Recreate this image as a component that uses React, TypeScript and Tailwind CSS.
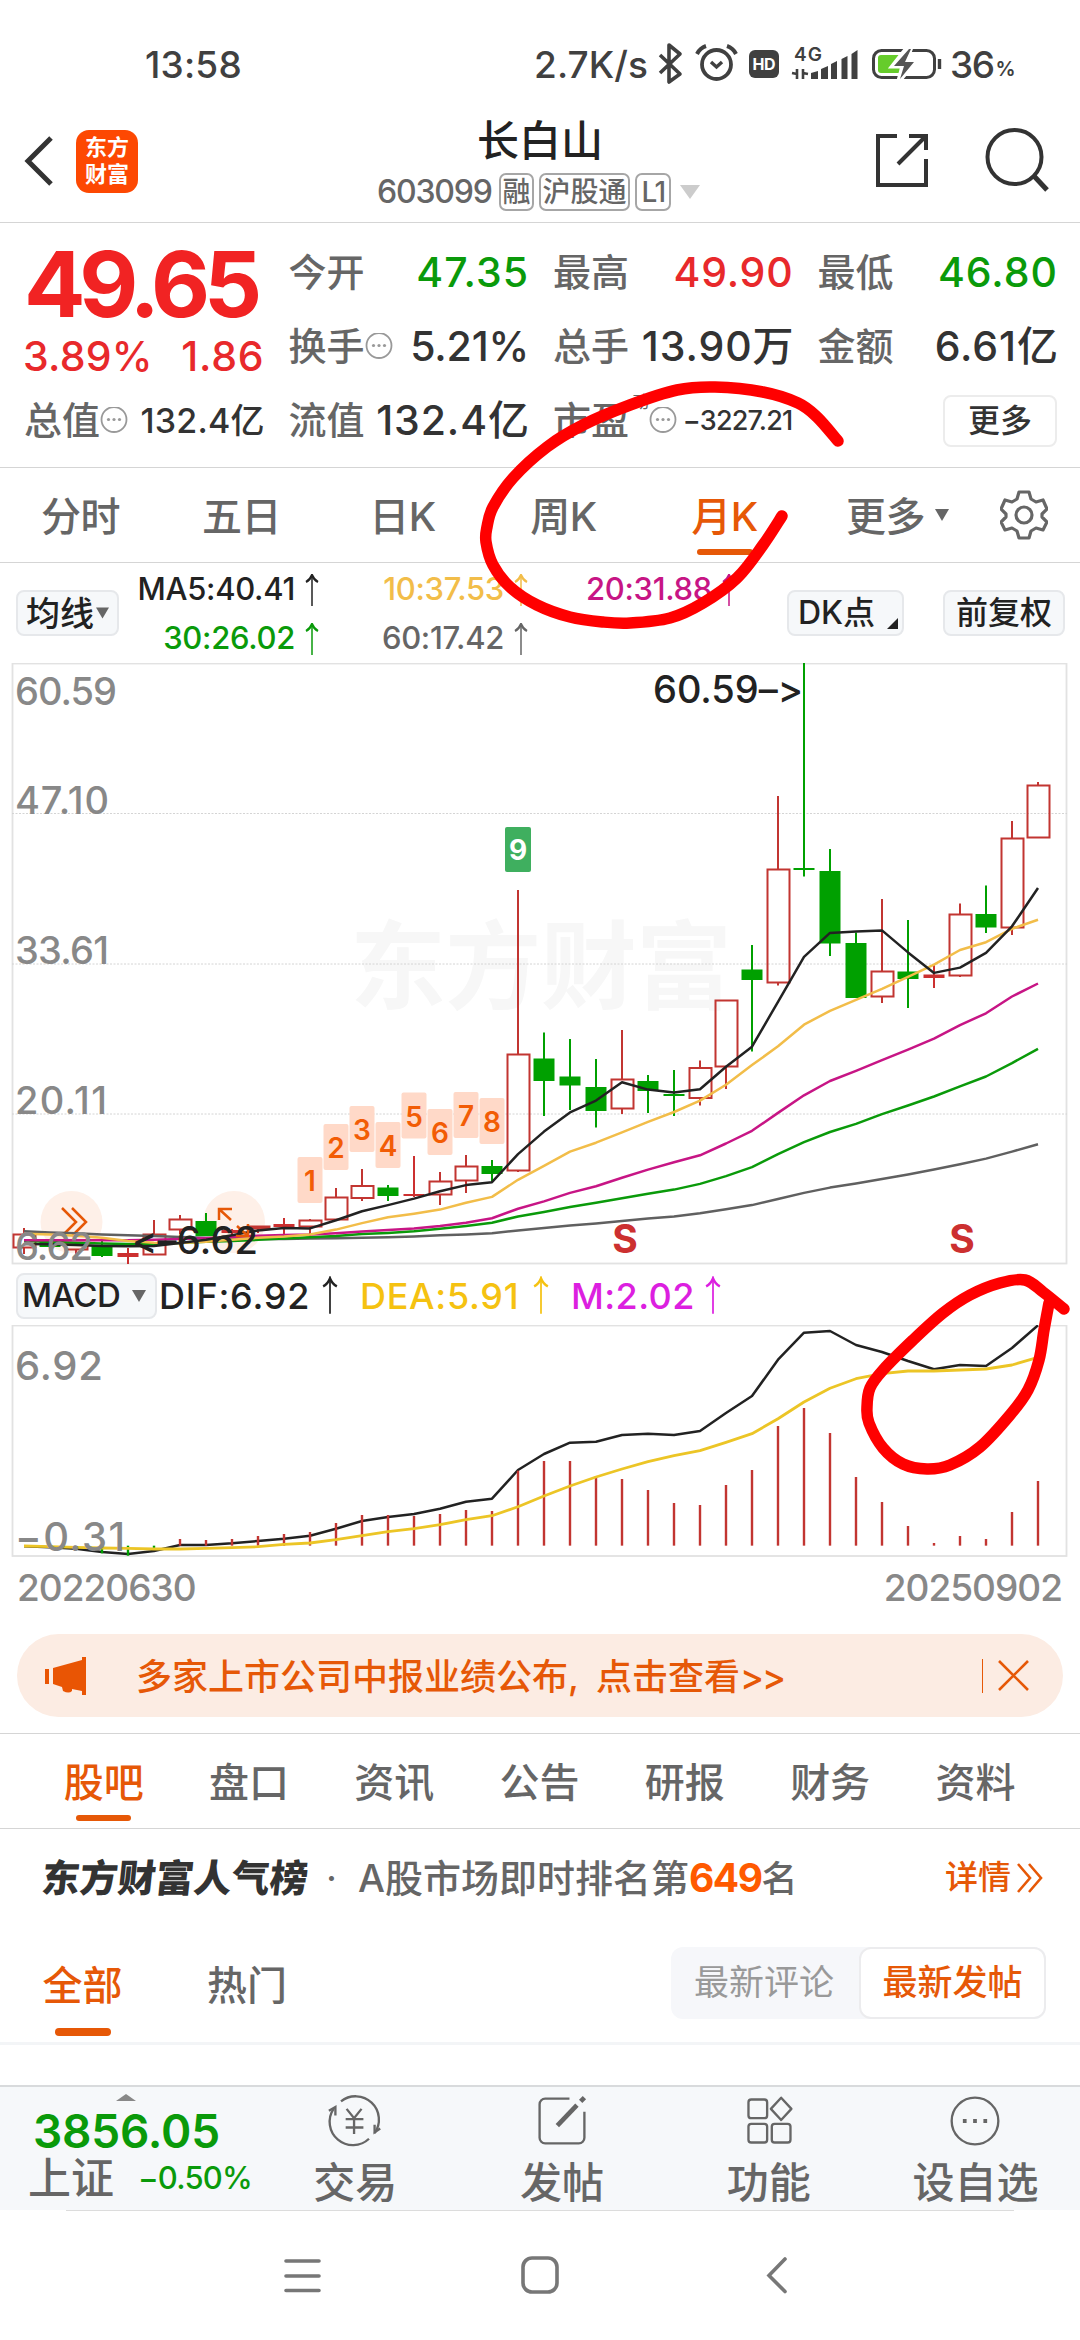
import React from 'react';
import clsx from 'clsx';

type Point = [number, number];

interface Candle {
  kind: 'up' | 'down' | 'flat';
  top: number;
  bottom: number;
  high: number;
  low: number;
}

const STEP = 26;
const FIRST_X = 24;
const xAt = (i: number) => FIRST_X + i * STEP;

const c = (kind: Candle['kind'], top: number, bottom: number, high: number, low: number): Candle => ({
  kind,
  top,
  bottom,
  high,
  low,
});

const candles: Candle[] = [
  c('up', 1234, 1248, 1228, 1254),
  c('down', 1242, 1247, 1242, 1249),
  c('up', 1244, 1250, 1244, 1254),
  c('down', 1246, 1256, 1238, 1257),
  c('flat', 1253, 1257, 1248, 1264),
  c('up', 1234, 1255, 1220, 1255),
  c('up', 1219, 1230, 1215, 1234),
  c('down', 1221, 1236, 1213, 1236),
  c('flat', 1230, 1233, 1229, 1235),
  c('up', 1226, 1229, 1226, 1233),
  c('flat', 1224, 1227, 1218, 1234),
  c('up', 1220, 1227, 1219, 1236),
  c('up', 1197, 1220, 1188, 1220),
  c('up', 1185.5, 1198.5, 1169, 1201),
  c('down', 1187.5, 1196, 1185, 1201),
  c('flat', 1194, 1196, 1156, 1197),
  c('up', 1181, 1195, 1172, 1205),
  c('up', 1166, 1181, 1155, 1193),
  c('down', 1166, 1174, 1160, 1182),
  c('up', 1054, 1171, 890, 1172),
  c('down', 1058.5, 1081, 1032.5, 1116),
  c('down', 1076.5, 1085.5, 1039, 1110),
  c('down', 1087, 1111, 1059, 1127.5),
  c('up', 1079, 1109, 1030, 1114),
  c('down', 1081, 1091, 1075, 1113),
  c('down', 1094, 1096, 1070, 1116),
  c('up', 1067.5, 1098.5, 1060.5, 1105.5),
  c('up', 1000, 1067, 1000, 1089),
  c('down', 969.5, 980, 945, 1051.5),
  c('up', 869, 983, 796, 985.5),
  c('down', 868, 870, 663, 876.5),
  c('down', 871, 943.5, 849, 956),
  c('down', 943, 998, 932.5, 998),
  c('up', 971, 997, 899, 1003),
  c('down', 971.5, 979, 920, 1008),
  c('flat', 974.5, 978, 964, 988),
  c('up', 914, 976, 903.5, 977),
  c('down', 914, 927.5, 885.5, 933),
  c('up', 838, 928, 821, 935),
  c('up', 785, 838, 782, 838),
];

// averages are sampled on a finer vertical scale than the candles
const averages = [
  {
    color: '#606060',
    values: [1424, 1427, 1429, 1432, 1434, 1436, 1438, 1440, 1442, 1443, 1443, 1442, 1441, 1440, 1439, 1437, 1434, 1432, 1429, 1422, 1416, 1410, 1405, 1399, 1393, 1388, 1380, 1370, 1360, 1345, 1330, 1317, 1307, 1296, 1285, 1273, 1260, 1246, 1229, 1211],
  },
  {
    color: '#0a9a0a',
    values: [1448, 1450, 1452, 1454, 1455, 1455, 1453, 1450, 1448, 1445, 1442, 1439, 1436, 1431, 1428, 1424, 1418, 1411, 1403, 1388, 1377, 1365, 1354, 1343, 1332, 1322, 1308, 1289, 1267, 1235, 1206, 1181, 1161, 1137, 1116, 1094, 1069, 1045, 1012, 977],
  },
  {
    color: '#c71585',
    values: [1446, 1446, 1446, 1446, 1446, 1445, 1443, 1441, 1438, 1435, 1433, 1432, 1429, 1425, 1421, 1417, 1411, 1403, 1392, 1369, 1351, 1330, 1314, 1293, 1273, 1255, 1238, 1209, 1178, 1134, 1091, 1056, 1031, 1005, 979, 952, 919, 890, 849, 817],
  },
  {
    color: '#f2bd49',
    values: [1430, 1432, 1435, 1440, 1448, 1452, 1453, 1450, 1445, 1440, 1437, 1432, 1420, 1404, 1390, 1381, 1371, 1354, 1340, 1298, 1264, 1229, 1207, 1182, 1156, 1132, 1104, 1065, 1017, 971, 918, 884, 857, 830, 801, 771, 735, 716, 683, 661],
  },
  {
    color: '#222222',
    values: [1455, 1456, 1458, 1460, 1461, 1460, 1453, 1445, 1434, 1422, 1416, 1417, 1397, 1375, 1360, 1344, 1326, 1311, 1304, 1235, 1180, 1133, 1104, 1059, 1077, 1084, 1076, 1021, 972, 862, 752, 693, 690, 687, 741, 791, 778, 742, 677, 583],
  },
];

const dif = [859, 862, 866, 876, 882, 873, 855, 855, 850, 843, 836, 827, 806, 783, 771, 762, 746, 725, 716, 630, 582, 548, 545, 525, 521, 525, 513, 459, 408, 299, 218, 213, 255, 276, 303, 328, 315, 318, 264, 196];
const dea = [858, 860, 862, 864, 865, 867, 867, 865, 863, 860, 853, 849, 839, 827, 815, 806, 794, 779, 767, 740, 708, 678, 651, 627, 605, 587, 572, 547, 521, 476, 426, 385, 356, 341, 333, 333, 330, 327, 315, 292];
const bars = [857, 857, 857, 880, 887, 868, 837, 840, 837, 828, 822, 816, 789, 765, 765, 768, 762, 750, 753, 632, 603, 603, 648, 657, 690, 729, 735, 675, 630, 498, 444, 519, 651, 726, 798, 849, 828, 837, 756, 663];

const priceY = (v: number) => 650 + v / 2.45;
const macdY = (v: number) => 1260 + v / 3;

const line = (values: number[], toY: (v: number) => number) =>
  values.map((v, i) => `${xAt(i)},${toY(v).toFixed(1)}`).join(' ');

const counters = [1157, 1124, 1106, 1122, 1092.5, 1109, 1092, 1098];

// Catmull-Rom through the sampled points of a pen stroke
const smooth = (pts: Point[]) => {
  let d = `M${pts[0][0]} ${pts[0][1]}`;
  for (let i = 0; i < pts.length - 1; i++) {
    const p0 = pts[i - 1] ?? pts[i];
    const p1 = pts[i];
    const p2 = pts[i + 1];
    const p3 = pts[i + 2] ?? p2;
    d += `C${p1[0] + (p2[0] - p0[0]) / 6} ${p1[1] + (p2[1] - p0[1]) / 6} ${p2[0] - (p3[0] - p1[0]) / 6} ${p2[1] - (p3[1] - p1[1]) / 6} ${p2[0]} ${p2[1]}`;
  }
  return d;
};

const penStrokes: Point[][] = [
  [[838, 441], [817, 417], [798, 403], [763, 392], [715, 387], [677, 390], [630, 405], [583, 425], [547, 447], [513, 478], [493, 507], [487, 527], [486, 542], [493, 565], [510, 587], [537, 605], [570, 617], [603, 622], [630, 623], [670, 618], [703, 603], [737, 578], [763, 545], [782, 516]],
  [[1064, 1309], [1043, 1292], [1025, 1280], [1000, 1283], [970, 1295], [943, 1313], [913, 1340], [883, 1370], [870, 1388], [867, 1407], [869, 1423], [883, 1448], [903, 1464], [927, 1469], [950, 1465], [980, 1447], [1010, 1415], [1028, 1390], [1039, 1360], [1044, 1330], [1049, 1303]],
];

const StatusBar: React.FC = () => (
  <div className="flex h-[112px] items-center pt-[18px] text-[37px] font-medium text-[#404040]">
    <span className="ml-[145px] w-[389px] tracking-[0.2px]">13:58</span>
    <span className="w-[123px] tracking-[0.1px]">2.7K/s</span>
    <svg className="h-[52px] w-[290px] shrink-0" viewBox="657 39 290 52" fill="none" stroke="#404040">
      <path d="M660 55l20 19-11 8V45l11 9-20 19" strokeWidth="3.6" strokeLinejoin="round" />
      <circle cx="716.500" cy="64.500" r="14.500" strokeWidth="3.8" />
      <path d="M697 54q3-6 9-8M736 54q-3-6-9-8" strokeWidth="4" />
      <path d="M711 62l5.500 5 5.500-5" strokeWidth="3.400" />
      <rect x="749" y="50" width="30" height="28" rx="6" fill="#404040" stroke="none" />
      <text x="764" y="70" textAnchor="middle" fontSize="16" fontWeight="700" fill="#fff" stroke="none" textLength="23">HD</text>
      <text x="794" y="61" fontSize="19" fill="#404040" stroke="none" textLength="28" fontWeight="600">4G</text>
      <path d="M797 79V69M797 74l-5-1M803 69v10M803 73l5 1" strokeWidth="2.600" />
      <path d="M811 79v-6l7-2v8zM821 79V69l7-3v13zM831 79V64l6-3v18zM841.500 79V59l6-3v23zM851.500 79V54l6-4v29z" fill="#404040" stroke="none" />
      <rect x="873.500" y="50.500" width="61" height="27" rx="8" strokeWidth="3" />
      <rect x="878" y="55" width="24" height="18" rx="3" fill="#66cc2b" stroke="none" />
      <path d="M908 47l-15 19h10l-4 15 16-20h-9l5-14z" fill="#555" stroke="#fff" strokeWidth="5" />
      <path d="M909 49l-15 17h10l-4 13 14-17h-9l6-13z" fill="#555" stroke="none" />
      <path d="M939.500 59v10" strokeWidth="3.400" />
    </svg>
    <span className="ml-[3px] tracking-[-1.5px]">36</span>
    <span className="mt-2 ml-[2px] text-[20px] font-semibold">%</span>
  </div>
);

const Badge: React.FC<{ children: React.ReactNode; className?: string }> = ({ children, className }) => (
  <span
    className={clsx(
      'flex h-[38px] items-center justify-center rounded-[7px] border-2 border-[#a6a6a6] text-[28px] font-medium text-[#666]',
      className
    )}
  >
    {children}
  </span>
);

const Header: React.FC = () => (
  <header className="flex h-[111px] border-b border-[#d5d5d5]">
    <div className="flex h-[98px] w-[204px] items-center pl-6">
      <svg className="h-[50px] w-[30px]" viewBox="0 0 30 50" fill="none" stroke="#333" strokeWidth="5">
        <path d="M27 2L4 25l23 23" />
      </svg>
      <div className="ml-[22px] flex h-[63px] w-[62px] flex-col items-center justify-center rounded-[13px] bg-[#fd4802] text-[22px] leading-[27px] font-bold text-white">
        <span>东方</span>
        <span>财富</span>
      </div>
    </div>
    <div className="flex-1">
      <h1 className="h-[57px] text-center text-[42px] leading-[58px] font-medium text-[#222]">长白山</h1>
      <div className="ml-[173px] flex h-[46px] items-center text-[32px] text-[#666]">
        <span className="w-[122px] font-medium tracking-[-1.2px]">603099</span>
        <Badge className="w-[35px]">融</Badge>
        <Badge className="ml-[5px] w-[91px]">沪股通</Badge>
        <Badge className="ml-[5px] w-[36px] tracking-[-1.5px]">L1</Badge>
        <svg className="ml-[9px] h-[14px] w-[20px]" viewBox="0 0 20 14">
          <path d="M0 0h20L10 14z" fill="#ccc" />
        </svg>
      </div>
    </div>
    <svg className="h-[98px] w-[204px]" viewBox="876 112 204 98" fill="none" stroke="#333" strokeWidth="4">
      <path d="M897 136h-19v49h48v-26M926 150v-14h-17M926 136l-28 28" />
      <circle cx="1014.500" cy="157" r="27" />
      <path d="M1034 176l13 14" strokeWidth="5" />
    </svg>
  </header>
);

const Dots: React.FC = () => (
  <svg className="h-7 w-7 shrink-0" viewBox="0 0 28 28">
    <circle cx="14" cy="12.500" r="12.500" fill="none" stroke="#999" strokeWidth="1.800" />
    <circle cx="8.500" cy="12.500" r="1.600" fill="#999" />
    <circle cx="14" cy="12.500" r="1.600" fill="#999" />
    <circle cx="19.500" cy="12.500" r="1.600" fill="#999" />
  </svg>
);

interface QuoteProps {
  label: string;
  value: string;
  dots?: boolean;
  unit?: string;
  className?: string;
}

const Quote: React.FC<QuoteProps> = ({ label, value, dots, unit, className }) => (
  <div className="flex h-[73.5px] items-center whitespace-nowrap">
    <span className="text-[38px] font-medium text-[#666]">{label}</span>
    {dots && <Dots />}
    <span className={clsx('-mr-px ml-auto font-medium', className)}>
      {value}
      {unit && <span className="tracking-normal">{unit}</span>}
    </span>
  </div>
);

const GREEN = 'text-[41px] tracking-[1px] text-[#0a9a0a]';
const RED = 'text-[41px] tracking-[0.8px] text-[#e8292b]';
const BIG = 'text-[41px] tracking-[0.9px] text-[#333]';

const QuotePanel: React.FC = () => (
  <section className="grid h-[245px] grid-cols-4 content-start gap-x-[25px] border-b border-[#d5d5d5] pt-[13px] pr-[23px] pl-6">
    <div className="row-span-2 text-[#f12323]">
      <div className="h-[94px] text-[91px] leading-[96px] font-bold tracking-[-6.2px]">49.65</div>
      <div className="-mr-px flex h-[54px] items-center justify-between text-[41px] font-medium text-[#e8292b]">
        <span className="-ml-px tracking-[0.2px]">3.89%</span>
        <span className="tracking-[0.8px]">1.86</span>
      </div>
    </div>
    <Quote label="今开" value="47.35" className={GREEN} />
    <Quote label="最高" value="49.90" className={RED} />
    <Quote label="最低" value="46.80" className={GREEN} />
    <Quote label="换手" dots value="5.21%" className="text-[41px] tracking-[-0.2px] text-[#333]" />
    <Quote label="总手" value="13.90" unit="万" className={BIG} />
    <Quote label="金额" value="6.61" unit="亿" className={BIG} />
    <Quote label="总值" dots value="132.4" unit="亿" className="text-[34px] tracking-[0.2px] text-[#333]" />
    <Quote label="流值" value="132.4" unit="亿" className={BIG} />
    <div className="flex h-[73.500px] items-center whitespace-nowrap">
      <span className="text-[38px] font-medium text-[#666]">市盈</span>
      <span className="-mt-9 ml-[3px] text-[17px] text-[#666]">动</span>
      <Dots />
      <span className="ml-auto text-[27px] font-medium tracking-[-0.8px] text-[#333]">−3227.21</span>
    </div>
    <div className="flex h-[73.500px] items-center justify-end">
      <button className="h-[52px] w-[114px] rounded-lg border-2 border-[#ececec] text-[32px] leading-[46px] font-medium text-[#333]">
        更多
      </button>
    </div>
  </section>
);

const periods = ['分时', '五日', '日K', '周K', '月K'];

const PeriodTabs: React.FC = () => (
  <nav className="flex h-[95px] border-b border-[#d5d5d5] text-[40px] font-medium text-[#666]">
    {periods.map((p) => (
      <div key={p} className={clsx('flex w-[161px] flex-col items-center', p === '月K' && 'text-[#e65807]')}>
        <span className="h-[81px] leading-[97px] tracking-[-0.5px]">{p}</span>
        {p === '月K' && <span className="h-[6px] w-[56px] rounded-full bg-[#e65807]" />}
      </div>
    ))}
    <span className="ml-[41px] leading-[97px] tracking-[-0.5px]">更多</span>
    <svg className="mt-[41px] ml-[10px] h-3 w-[14px]" viewBox="0 0 14 12">
      <path d="M0 0h14L7 12z" fill="#666" />
    </svg>
    <svg className="mt-[22px] ml-[51px] h-[50px] w-[48px]" viewBox="0 0 48 50" fill="none" stroke="#666" strokeWidth="3.200" strokeLinejoin="round">
      <path d="M19 2h10l2 7 5 3 7-2 4 9-5 5v3l5 5-4 8-7-2-5 3-2 7H19l-2-7-5-3-7 2-4-8 5-5v-3l-5-5 4-9 7 2 5-3z" />
      <circle cx="24" cy="25" r="8" />
    </svg>
  </nav>
);

const UpArrow: React.FC<{ className?: string }> = ({ className }) => (
  <svg className={clsx('shrink-0', className)} viewBox="0 0 14 32" fill="none" stroke="currentColor">
    <path d="M7 2v30" strokeWidth="1.500" />
    <path d="M1 8q4-2 6-7 2 5 6 7" strokeWidth="2.200" />
  </svg>
);

const Ma: React.FC<{ text: string; className: string }> = ({ text, className }) => (
  <div className={clsx('flex h-[49px] items-center justify-end', className)}>
    <span>{text}</span>
    <UpArrow className="ml-[9px] h-8 w-4" />
  </div>
);

const CHIP = 'flex h-[46px] items-center rounded-lg border-2 border-[#e6e8eb] bg-[#f6f8fa] font-medium text-[#222]';

const AverageBar: React.FC = () => (
  <div className="flex h-[100px] items-center">
    <div className={clsx(CHIP, 'ml-4 w-[103px] pl-2 text-[34px]')}>
      均线
      <svg className="ml-[2px] h-[12px] w-[13px]" viewBox="0 0 14 12">
        <path d="M0 0h14L7 12z" fill="#666" />
      </svg>
    </div>
    <div className="grid grid-cols-[201px_209px_208px] pt-[2px] text-[31px] font-medium tracking-[-0.3px]">
      <Ma text="MA5:40.41" className="text-[#222]" />
      <Ma text="10:37.53" className="text-[#f2bd49]" />
      <Ma text="20:31.88" className="text-[#c71585]" />
      <Ma text="30:26.02" className="text-[#0a9a0a]" />
      <Ma text="60:17.42" className="text-[#666]" />
    </div>
    <div className={clsx(CHIP, 'ml-[50px] w-[117px] pl-[9px] text-[32px]')}>
      DK点
      <svg className="mt-5 ml-auto mr-1 h-[11px] w-[11px]" viewBox="0 0 11 11">
        <path d="M11 0v11H0z" fill="#222" />
      </svg>
    </div>
    <div className={clsx(CHIP, 'ml-[39px] w-[122px] justify-center text-[32px]')}>前复权</div>
  </div>
);

const CandleShape: React.FC<{ candle: Candle; x: number }> = ({ candle, x }) => {
  const { kind, top, bottom, high, low } = candle;
  const height = bottom - top;
  if (kind === 'up') {
    return (
      <g stroke="#c23531" strokeWidth="2" fill="none">
        <path d={`M${x} ${high}V${top}M${x} ${bottom}V${low}`} />
        <rect x={x - 10.5} y={top + 0.5} width="22" height={Math.max(height - 1, 1)} />
      </g>
    );
  }
  const color = kind === 'down' ? '#00a000' : '#cc3030';
  return (
    <g fill={color}>
      <rect x={x - 1} y={high} width="2" height={low - high} />
      <rect x={x - 10.5} y={top} width="21" height={height} />
    </g>
  );
};

const PriceChart: React.FC = () => (
  <svg className="block h-[602px] w-full font-medium" viewBox="0 663 1080 602">
    <rect x="12.500" y="663.500" width="1054" height="600" fill="none" stroke="#e2e2e2" strokeWidth="1.800" />
    <text x="350" y="1001" fontSize="96" fontWeight="700" fill="#f7f7f7" textLength="382">东方财富</text>
    {[813.5, 964, 1114].map((y) => (
      <path key={y} d={`M12 ${y}H1067`} stroke="#d4d4d4" strokeDasharray="2 1.500" />
    ))}
    <circle cx="71.500" cy="1222" r="31" fill="#fef0e8" />
    <circle cx="234" cy="1222" r="31" fill="#fef0e8" />
    <path d="M62 1208l14 14-14 14M72 1208l14 14-14 14" fill="none" stroke="#e65807" strokeWidth="2.500" />
    <path d="M219 1220v-11h13M219 1209l12 11" fill="none" stroke="#e65807" strokeWidth="2.500" />
    {candles.map((candle, i) => (
      <CandleShape key={i} candle={candle} x={xAt(i)} />
    ))}
    {averages.map((avg) => (
      <polyline key={avg.color} points={line(avg.values, priceY)} fill="none" stroke={avg.color} strokeWidth="2.500" strokeLinejoin="round" />
    ))}
    <path d="M248 1224v12h-12M237 1226l11 10" fill="none" stroke="#e65807" strokeWidth="2.500" />
    {counters.map((y, i) => (
      <g key={i}>
        <rect x={xAt(i + 11) - 12.5} y={y} width="25" height="46" rx="2" fill="#ffd9c8" />
        <text x={xAt(i + 11)} y={y + 34} fontSize="28" fontWeight="600" fill="#f25c05" textAnchor="middle">
          {i + 1}
        </text>
      </g>
    ))}
    <rect x="505" y="827" width="26" height="45" rx="2" fill="#3faf5f" />
    <text x="518" y="860" fontSize="28" fontWeight="700" fill="#fff" textAnchor="middle">9</text>
    <g fontSize="38" fill="#888">
      <text x="15" y="705" textLength="102">60.59</text>
      <text x="15" y="813.500" textLength="94">47.10</text>
      <text x="15" y="964" textLength="94">33.61</text>
      <text x="15" y="1114" textLength="92">20.11</text>
      <text x="15" y="1260" textLength="78">6.62</text>
    </g>
    <g fontSize="38" fill="#222">
      <text x="653" y="702.500" textLength="150">60.59–&gt;</text>
      <text x="132" y="1254" textLength="126">&lt;–6.62</text>
    </g>
    <g fontSize="39" fontWeight="700" fill="#cc3030" textAnchor="middle">
      <text x="625" y="1253">S</text>
      <text x="962" y="1253">S</text>
    </g>
  </svg>
);

const MacdBar: React.FC = () => (
  <div className="flex h-[60px] items-center pt-px text-[36px] font-medium">
    <div className={clsx(CHIP, 'ml-4 w-[141px] pl-[4px] text-[33px]')}>
      <span className="w-[110px] tracking-[-0.5px]">MACD</span>
      <svg className="h-3 w-[14px]" viewBox="0 0 14 12">
        <path d="M0 0h14L7 12z" fill="#666" />
      </svg>
    </div>
    <span className="ml-[2px] w-[163px] tracking-[0.8px] text-[#222]">DIF:6.92</span>
    <UpArrow className="h-[39px] w-[16px] text-[#222]" />
    <span className="ml-[22px] w-[173px] tracking-[0.7px] text-[#f5c211]">DEA:5.91</span>
    <UpArrow className="h-[39px] w-[16px] text-[#f5c211]" />
    <span className="ml-[22px] w-[134px] tracking-[0.4px] text-[#dc1fe0]">M:2.02</span>
    <UpArrow className="h-[39px] w-[16px] text-[#dc1fe0]" />
  </div>
);

const MacdChart: React.FC = () => (
  <svg className="block h-[233px] w-full font-medium" viewBox="0 1325 1080 233">
    <rect x="12.500" y="1325.500" width="1054" height="230.500" fill="none" stroke="#e2e2e2" strokeWidth="1.800" />
    <polyline points={line(dif, macdY)} fill="none" stroke="#222" strokeWidth="2.500" strokeLinejoin="round" />
    {bars.map((v, i) => (
      <path key={i} d={`M${xAt(i)} ${macdY(857)}V${macdY(v)}`} stroke={v > 857 ? '#00a000' : '#c23531'} strokeWidth="2.400" />
    ))}
    <polyline points={line(dea, macdY)} fill="none" stroke="#ecc526" strokeWidth="2.800" strokeLinejoin="round" />
    <g fontSize="40" fill="#888">
      <text x="15" y="1379.500" textLength="88">6.92</text>
      <text x="15" y="1551" textLength="110">−0.31</text>
    </g>
  </svg>
);

const Notice: React.FC = () => (
  <div className="mx-[17px] mt-4 flex h-[83px] items-center rounded-full bg-[#fcece3] text-[#e65807]">
    <svg className="ml-[27px] h-[38px] w-[44px]" viewBox="0 0 44 38" fill="#e95504">
      <path d="M1 12h4v15H1zM9 11L38 3V0h4v38h-4v-4l-10-2v2q-3 3-9 0l-1-4-9-3z" />
    </svg>
    <span className="ml-[48px] pt-[2px] text-[36px] font-medium whitespace-nowrap">
      多家上市公司中报业绩公布<span className="inline-block w-[28px]">,</span>点击查看<span className="tracking-[-2px]">&gt;&gt;</span>
    </span>
    <span className="ml-auto h-[34px] w-px bg-[#e65807]" />
    <svg className="mr-[34px] ml-[15px] h-[31px] w-[31px]" viewBox="0 0 31 31" stroke="#e65807" strokeWidth="2.600">
      <path d="M1 1l29 29M30 1L1 30" />
    </svg>
  </div>
);

const sections = ['股吧', '盘口', '资讯', '公告', '研报', '财务', '资料'];

const SectionTabs: React.FC = () => (
  <nav className="mt-4 flex h-[96px] border-y border-[#d5d5d5] pl-[31px] text-[40px] font-medium text-[#666]">
    {sections.map((s, i) => (
      <div key={s} className={clsx('flex w-[145.300px] flex-col items-center', i === 0 && 'text-[#e65807]')}>
        <span className="h-[81px] leading-[98px]">{s}</span>
        {i === 0 && <span className="h-[6px] w-[55px] rounded-full bg-[#e65807]" />}
      </div>
    ))}
  </nav>
);

const RankRow: React.FC = () => (
  <div className="flex h-[98px] items-center pr-[37px] pl-[42px] whitespace-nowrap">
    <span className="w-[284px] -skew-x-6 text-[38px] font-black text-[#333]">东方财富人气榜</span>
    <span className="w-[32px] text-[38px] text-[#666]">·</span>
    <span className="text-[38px] font-medium text-[#666]">
      A股市场即时排名第<span className="text-[39px] font-bold tracking-[-1.500px] text-[#ff5a00]">649</span>
      <span className="text-[36px]">名</span>
    </span>
    <span className="ml-auto text-[33px] font-medium text-[#e65807]">详情</span>
    <svg className="ml-[6px] h-[30px] w-[26px]" viewBox="0 0 26 30" fill="none" stroke="#e65807" strokeWidth="2.600">
      <path d="M1 1l12 14L1 29M12 1l12 14-12 14" />
    </svg>
  </div>
);

const FilterRow: React.FC = () => (
  <div className="flex h-[118px] border-b-[3px] border-[#f3f5f7] text-[40px] font-medium text-[#666]">
    <div className="ml-[42px] flex w-[81px] flex-col items-center text-[#e65807]">
      <span className="h-[101px] leading-[117px]">全部</span>
      <span className="h-2 w-[56px] rounded-full bg-[#e65807]" />
    </div>
    <span className="ml-[84px] leading-[117px]">热门</span>
    <div className="mt-5 mr-[34px] ml-auto flex h-[72px] w-[375px] rounded-xl bg-[#f6f7fa] text-[35px] leading-[70px]">
      <span className="w-[188px] pl-[23px] font-normal text-[#999]">最新评论</span>
      <span className="flex-1 rounded-xl border-2 border-[#ececee] bg-white text-center leading-[67px] text-[#e65807]">最新发帖</span>
    </div>
  </div>
);

const actions = [
  {
    label: '交易',
    icon: (
      <>
        <path d="M15 9A25 25 0 0 1 51 43M45 49A25 25 0 0 1 7 17" />
        <path d="M2 19l7-4v9M57 38l-6 4v-8" />
        <path d="M21 17l8 10 8-10M20 28h19M20 37h19M29 27v17" />
      </>
    ),
  },
  {
    label: '发帖',
    icon: (
      <>
        <path d="M38 6H12a6 6 0 0 0-6 6v36a6 6 0 0 0 6 6h36a6 6 0 0 0 6-6V20" />
        <path d="M25 35L46 13" strokeWidth="5" />
        <path d="M50 9l4-4" strokeWidth="5" />
      </>
    ),
  },
  {
    label: '功能',
    icon: (
      <>
        <rect x="8" y="7" width="20" height="20" rx="3" />
        <path d="M43 5l11 12-11 12-11-12z" strokeLinejoin="round" />
        <rect x="8" y="33" width="20" height="20" rx="3" />
        <rect x="33" y="33" width="20" height="20" rx="3" />
      </>
    ),
  },
  {
    label: '设自选',
    icon: (
      <>
        <circle cx="30" cy="30" r="25" />
        <path d="M17 30h4M28 30h4M39 30h4" strokeWidth="4.500" />
      </>
    ),
  },
];

const BottomBar: React.FC = () => (
  <footer className="flex h-[125px] border-t-2 border-[#d8dadc] bg-[#f6f8fa] text-[#666]">
    <div className="w-[252px]">
      <svg className="mt-[7px] ml-[116px] h-[7px] w-5" viewBox="0 0 20 7">
        <path d="M10 0l10 7H0z" fill="#888" />
      </svg>
      <div className="mt-[3px] ml-[33px] h-[53px] text-[46px] leading-[54px] font-semibold tracking-[-0.2px] text-[#0a9a0a]">
        3856.05
      </div>
      <div className="ml-[28px] flex h-[42px] items-center whitespace-nowrap">
        <span className="w-[112px] text-[43px] leading-[42px] font-medium">上证</span>
        <span className="text-[31px] font-medium tracking-[-0.8px] text-[#0a9a0a]">−0.50%</span>
      </div>
    </div>
    {actions.map((a) => (
      <div key={a.label} className="flex w-[206.700px] flex-col items-center">
        <svg className="mt-[6px] h-[60px] w-[60px]" viewBox="0 0 60 60" fill="none" stroke="#666" strokeWidth="2.500">
          {a.icon}
        </svg>
        <span className="mt-[7px] text-[42px] leading-[54px] font-medium">{a.label}</span>
      </div>
    ))}
  </footer>
);

const SystemNav: React.FC = () => (
  <div className="flex h-[130px] flex-col items-center">
    <div className="h-px w-[948px] bg-[#dcdcdc]" />
    <svg className="h-[129px] w-full" viewBox="0 2211 1080 129" fill="none" stroke="#777" strokeWidth="3.600" strokeLinecap="round">
      <path d="M286 2261h33M286 2276h33M286 2290.500h33" />
      <rect x="523" y="2258" width="34" height="34" rx="9" />
      <path d="M785 2259l-16 16.500 16 16" />
    </svg>
  </div>
);

const App: React.FC = () => (
  <div className="relative flex h-[2340px] w-[1080px] flex-col overflow-hidden bg-white font-['Inter','Noto_Sans_CJK_SC',sans-serif] [font-feature-settings:'calt'_0]">
    <StatusBar />
    <Header />
    <QuotePanel />
    <PeriodTabs />
    <AverageBar />
    <PriceChart />
    <MacdBar />
    <MacdChart />
    <div className="flex h-[60px] items-center justify-between pr-[18px] pl-[17px] text-[37px] font-medium tracking-[-1px] text-[#888]">
      <span>20220630</span>
      <span>20250902</span>
    </div>
    <Notice />
    <SectionTabs />
    <RankRow />
    <FilterRow />
    <div className="flex-1" />
    <BottomBar />
    <SystemNav />
    <svg className="pointer-events-none absolute inset-0 h-full w-full" viewBox="0 0 1080 2340" fill="none" stroke="#ff0000" strokeWidth="11.500" strokeLinecap="round" strokeLinejoin="round">
      {penStrokes.map((pts, i) => (
        <path key={i} d={smooth(pts)} />
      ))}
    </svg>
  </div>
);

export default App;
